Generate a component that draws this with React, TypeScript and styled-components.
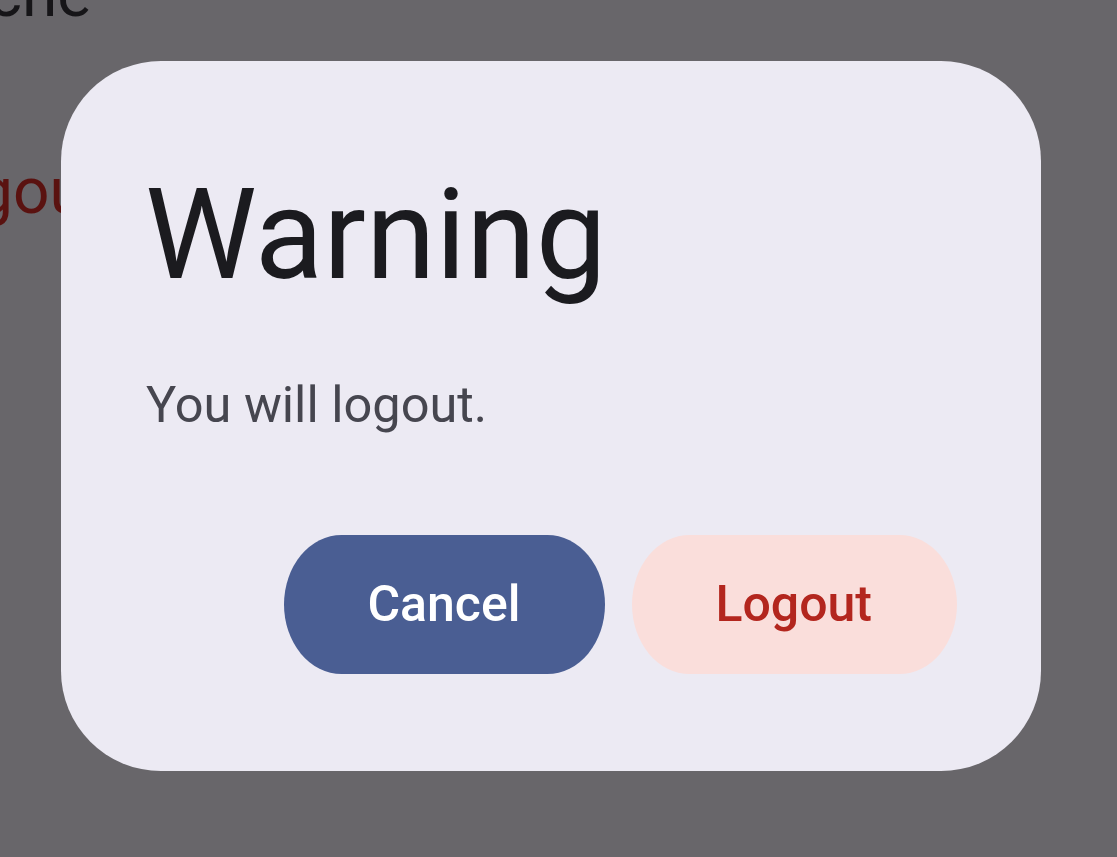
import React from "react";
import styled, { createGlobalStyle } from "styled-components";

const Global = createGlobalStyle`
  html, body { margin: 0; padding: 0; }
  body {
    width: 1117px;
    height: 857px;
    overflow: hidden;
    background: #68666a;
    font-family: Roboto, "Noto Sans", sans-serif;
  }
`;

const Page = styled.div`
  width: 1117px;
  height: 857px;
  overflow: hidden;
  background: #68666a;
`;

const BgText = styled.div<{ $color: string; $mt: number; $ml: number }>`
  font-size: 64px;
  line-height: 1;
  color: ${(p) => p.$color};
  margin-top: ${(p) => p.$mt}px;
  margin-left: ${(p) => p.$ml}px;
  white-space: nowrap;
`;

const Scrim = styled.div`
  position: fixed;
  inset: 0;
  display: flex;
  align-items: flex-start;
  justify-content: flex-start;
  padding: 61px 0 0 61px;
`;

const Dialog = styled.div`
  width: 980px;
  height: 710px;
  box-sizing: border-box;
  background: #eceaf3;
  border-radius: 100px;
  padding: 111px 84px 0 84px;
  display: flex;
  flex-direction: column;
`;

const Title = styled.h1`
  margin: 0;
  font-size: 126px;
  font-weight: 400;
  line-height: 1;
  color: #1b1b1f;
`;

const Body = styled.p`
  margin: 82px 0 0 1px;
  font-size: 50.5px;
  line-height: 1;
  color: #46464f;
`;

const Actions = styled.div`
  margin-top: 104px;
  display: flex;
  justify-content: flex-end;
  gap: 27px;
`;

const Button = styled.button<{ $variant: "primary" | "danger" }>`
  height: 139px;
  padding: 0 85px 0 83px;
  border: none;
  border-radius: 58px / 70px;
  font-family: Roboto, "Noto Sans", sans-serif;
  font-size: 50px;
  font-weight: 500;
  line-height: 1;
  background: ${(p) => (p.$variant === "primary" ? "#4a5e93" : "#fadedb")};
  color: ${(p) => (p.$variant === "primary" ? "#ffffff" : "#b3261e")};
  cursor: pointer;
`;

export default function App() {
  return (
    <>
      <Global />
      <Page>
        <BgText $color="#161518" $mt={-37} $ml={-88}>Cache</BgText>
        <BgText $color="#5a1210" $mt={133} $ml={-94}>Logout</BgText>
      </Page>
      <Scrim>
        <Dialog>
          <Title>Warning</Title>
          <Body>You will logout.</Body>
          <Actions>
            <Button $variant="primary">Cancel</Button>
            <Button $variant="danger">Logout</Button>
          </Actions>
        </Dialog>
      </Scrim>
    </>
  );
}
